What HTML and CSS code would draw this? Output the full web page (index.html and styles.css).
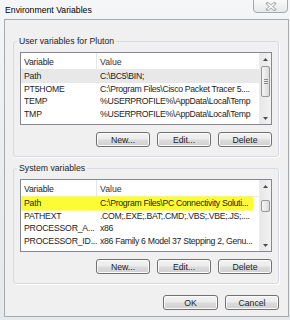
FILE: index.html
```html
<!DOCTYPE html>
<html>
<head>
<meta charset="utf-8">
<link rel="stylesheet" href="styles.css">
</head>
<body>
<div class="win">
  <div class="titlebar">
    <span class="title">Environment Variables</span>
    <div class="close">
      <svg width="12" height="9" viewBox="0 0 12 9"><path d="M2.5 1.5 L9.5 7.5 M9.5 1.5 L2.5 7.5" stroke="#a9adb2" stroke-width="3" stroke-linecap="square"/><path d="M2.5 1.5 L9.5 7.5 M9.5 1.5 L2.5 7.5" stroke="#ffffff" stroke-width="1.3"/></svg>
    </div>
  </div>
  <div class="panel">
    <fieldset class="group first">
      <legend>User variables for Pluton</legend>
      <div class="list">
        <div class="cols">
          <div class="head"><div class="c1 hc">Variable</div><div class="c2">Value</div></div>
          <div class="row sel"><div class="c1">Path</div><div class="c2">C:\BC5\BIN;</div></div>
          <div class="row"><div class="c1">PT5HOME</div><div class="c2">C:\Program Files\Cisco Packet Tracer 5....</div></div>
          <div class="row"><div class="c1">TEMP</div><div class="c2">%USERPROFILE%\AppData\Local\Temp</div></div>
          <div class="row"><div class="c1">TMP</div><div class="c2">%USERPROFILE%\AppData\Local\Temp</div></div>
        </div>
        <div class="vscroll">
          <div class="arrow"><svg width="5" height="3" viewBox="0 0 5 3"><path d="M0 3 L2.5 0 L5 3Z" fill="#4a4a4a"/></svg></div>
          <div class="track"><div class="thumb" style="margin-top:1px;height:31px"><span class="grip"></span></div></div>
          <div class="arrow"><svg width="5" height="3" viewBox="0 0 5 3"><path d="M0 0 L2.5 3 L5 0Z" fill="#4a4a4a"/></svg></div>
        </div>
      </div>
      <div class="btns">
        <div class="btn">New...</div>
        <div class="btn">Edit...</div>
        <div class="btn">Delete</div>
      </div>
    </fieldset>
    <fieldset class="group second">
      <legend>System variables</legend>
      <div class="list">
        <div class="cols">
          <div class="head"><div class="c1 hc">Variable</div><div class="c2">Value</div></div>
          <div class="row mark"><div class="c1">Path</div><div class="c2">C:\Program Files\PC Connectivity Soluti...</div></div>
          <div class="row"><div class="c1">PATHEXT</div><div class="c2">.COM;.EXE;.BAT;.CMD;.VBS;.VBE;.JS;....</div></div>
          <div class="row"><div class="c1">PROCESSOR_A...</div><div class="c2">x86</div></div>
          <div class="row"><div class="c1">PROCESSOR_ID...</div><div class="c2">x86 Family 6 Model 37 Stepping 2, Genu...</div></div>
        </div>
        <div class="vscroll">
          <div class="arrow"><svg width="5" height="3" viewBox="0 0 5 3"><path d="M0 3 L2.5 0 L5 3Z" fill="#4a4a4a"/></svg></div>
          <div class="track"><div class="thumb" style="margin-top:8px;height:12px"></div></div>
          <div class="arrow"><svg width="5" height="3" viewBox="0 0 5 3"><path d="M0 0 L2.5 3 L5 0Z" fill="#4a4a4a"/></svg></div>
        </div>
      </div>
      <div class="btns">
        <div class="btn">New...</div>
        <div class="btn">Edit...</div>
        <div class="btn">Delete</div>
      </div>
    </fieldset>
    <div class="btns main">
      <div class="btn wide">OK</div>
      <div class="btn">Cancel</div>
    </div>
  </div>
</div>
</body>
</html>
```
FILE: styles.css
```css
* { box-sizing: border-box; }
html, body { margin: 0; padding: 0; }
body {
  width: 290px;
  height: 320px;
  overflow: hidden;
  font-family: "Liberation Sans", Arial, sans-serif;
  font-size: 8.7px;
  color: #1c1c1c;
  background: #e9ecef;
}
.win {
  height: 320px;
  display: flex;
  flex-direction: column;
  background: linear-gradient(180deg, #f5f6f7 0%, #eceef0 40%, #e6e9ec 100%);
}
.titlebar {
  height: 19px;
  position: relative;
  display: flex;
  align-items: center;
  padding-left: 5px;
  padding-top: 1px;
}
.title { color: #000; line-height: 10px; }
.close {
  position: absolute;
  top: -1px;
  right: 2px;
  width: 35px;
  height: 14px;
  border: 1px solid #a3a9b0;
  border-radius: 0 0 4px 4px;
  background: linear-gradient(180deg, #f9f9fa, #e6e8eb);
  display: flex;
  justify-content: center;
  align-items: center;
  padding-top: 1px;
}
.panel {
  margin-left: 4px;
  width: 285px;
  height: 298px;
  background: #f0f0f0;
  border: 1px solid #a6abb0;
  padding-top: 16px;
}
.group {
  margin: 0 0 0 8px;
  width: 266px;
  min-width: 0;
  border: 1px solid #d5dbe0;
  border-radius: 3px;
  padding: 6px 6px 9px 6px;
  box-shadow: 1px 1px 0 #fdfdfd;
}
.group.second { margin-top: 6px; }
.group legend {
  padding: 0 2px;
  margin-left: -3px;
  line-height: 10px;
  height: 10px;
  color: #1c1c1c;
}
.list {
  height: 73px;
  border: 1px solid #828790;
  background: #fff;
  display: flex;
}
.cols { flex: 1; min-width: 0; overflow: hidden; }
.head {
  display: flex;
  height: 17px;
  border-bottom: 1px solid #e5e7ea;
  line-height: 12.5px;
}
.head .c1, .head .c2 { padding-top: 3px; }
.head .hc { border-right: 1px solid #e3e5e8; }
.head .c2 { color: #333; letter-spacing: 0; }
.row {
  display: flex;
  height: 12.6px;
  line-height: 12.6px;
  white-space: nowrap;
}
.c1 {
  width: 76px;
  flex: none;
  padding-left: 3px;
  overflow: hidden;
  white-space: nowrap;
  letter-spacing: -0.2px;
}
.c2 {
  flex: 1;
  min-width: 0;
  padding-left: 3px;
  overflow: hidden;
  white-space: nowrap;
  letter-spacing: -0.3px;
}
.row.sel { background: #e8e8e8; }
.row.mark {
  background: #fbfb36;
  box-shadow: 0 0 1.5px 1px #fafa6a;
  margin-right: 6px;
  border-radius: 2px;
}
.vscroll {
  width: 12px;
  flex: none;
  display: flex;
  flex-direction: column;
  background: linear-gradient(90deg, #e7e7e7, #f2f2f2);
  border-left: 1px solid #ececec;
}
.arrow {
  height: 12px;
  flex: none;
  display: flex;
  justify-content: center;
  align-items: center;
}
.arrow svg { display: block; }
.track { flex: 1; padding: 0 1px; }
.thumb {
  border: 1px solid #979797;
  border-radius: 2px;
  background: linear-gradient(90deg, #f4f4f4 0%, #e9e9e9 50%, #d9d9d9 100%);
  display: flex;
  justify-content: center;
  align-items: center;
}
.grip {
  width: 4px;
  height: 5px;
  border-top: 1px solid #8a8a8a;
  border-bottom: 1px solid #8a8a8a;
  background: linear-gradient(#8a8a8a, #8a8a8a) center / 100% 1px no-repeat;
}
.btns {
  display: flex;
  justify-content: flex-end;
  gap: 7px;
  margin-top: 7px;
}
.btn {
  width: 54px;
  height: 15px;
  border: 1px solid #707070;
  border-radius: 3px;
  background: linear-gradient(180deg, #f3f3f3 0%, #ebebeb 48%, #dcdcdc 52%, #d0d0d0 100%);
  box-shadow: inset 0 0 0 1px #fbfbfb;
  display: flex;
  justify-content: center;
  align-items: center;
  line-height: 10px;
  color: #1c1c1c;
}
.btns.main {
  margin-top: 11px;
  padding-right: 9px;
}
.btn.wide { width: 55px; }
```
